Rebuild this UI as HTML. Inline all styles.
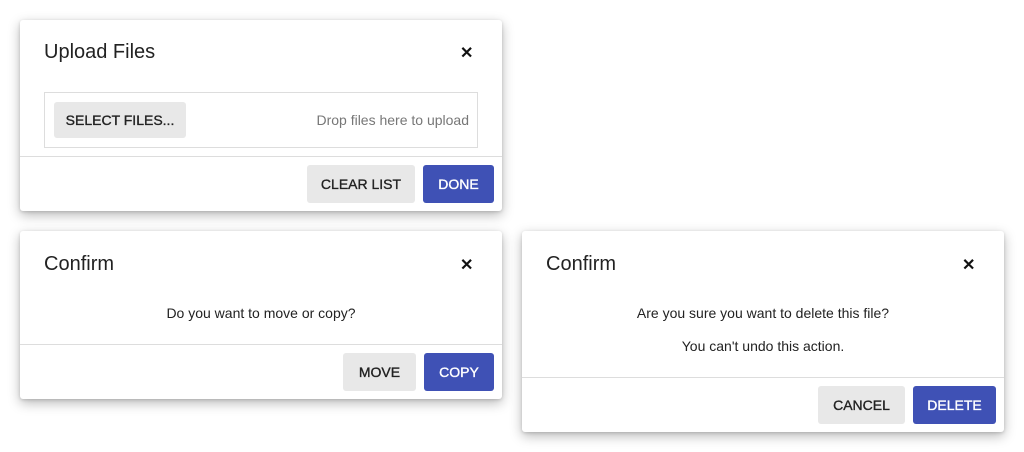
<!DOCTYPE html>
<html><head><style>
body{margin:0;width:1024px;height:452px;background:#fff;font-family:"Liberation Sans",sans-serif;position:relative;overflow:hidden}
.d{position:absolute;background:#fff;border-radius:3px;box-shadow:0 4px 12px rgba(0,0,0,.28),0 1px 3px rgba(0,0,0,.15)}
.t{position:absolute;left:24px;font-size:20px;color:#222}
.x{position:absolute;font-size:16px;font-weight:bold;color:#111}
.hr{position:absolute;left:0;right:0;height:1px;background:#ddd}
.b{position:absolute;height:38px;line-height:38px;text-align:center;font-size:14px;-webkit-text-stroke:0.35px #222;border-radius:3px;background:#e8e8e8;color:#222}
.p{background:#3f51b5;color:#fff;-webkit-text-stroke:0.35px #fff}
.m{position:absolute;left:0;right:0;text-align:center;font-size:14px;color:#222}
</style></head><body>
<div class="d" style="left:20px;top:20px;width:482px;height:191px">
 <div class="t" style="top:21px">Upload Files</div>
 <div class="x" style="left:440px;top:23px">✕</div>
 <div style="position:absolute;left:24px;top:72px;width:432px;height:54px;border:1px solid #ddd"></div>
 <div class="b" style="left:34px;top:82px;width:132px;height:36px;line-height:36px">SELECT FILES...</div>
 <div style="position:absolute;right:33px;top:92px;font-size:14px;color:#777">Drop files here to upload</div>
 <div class="hr" style="top:136px"></div>
 <div class="b" style="left:287px;top:145px;width:108px">CLEAR LIST</div>
 <div class="b p" style="left:403px;top:145px;width:71px">DONE</div>
</div>
<div class="d" style="left:20px;top:231px;width:482px;height:168px">
 <div class="t" style="top:22px">Confirm</div>
 <div class="x" style="left:440px;top:24px">✕</div>
 <div class="m" style="top:74px">Do you want to move or copy?</div>
 <div class="hr" style="top:113px"></div>
 <div class="b" style="left:323px;top:122px;width:73px">MOVE</div>
 <div class="b p" style="left:404px;top:122px;width:70px">COPY</div>
</div>
<div class="d" style="left:522px;top:231px;width:482px;height:201px">
 <div class="t" style="top:22px">Confirm</div>
 <div class="x" style="left:440px;top:24px">✕</div>
 <div class="m" style="top:74px">Are you sure you want to delete this file?</div>
 <div class="m" style="top:107px">You can't undo this action.</div>
 <div class="hr" style="top:146px"></div>
 <div class="b" style="left:296px;top:155px;width:87px">CANCEL</div>
 <div class="b p" style="left:391px;top:155px;width:83px">DELETE</div>
</div>
</body></html>
